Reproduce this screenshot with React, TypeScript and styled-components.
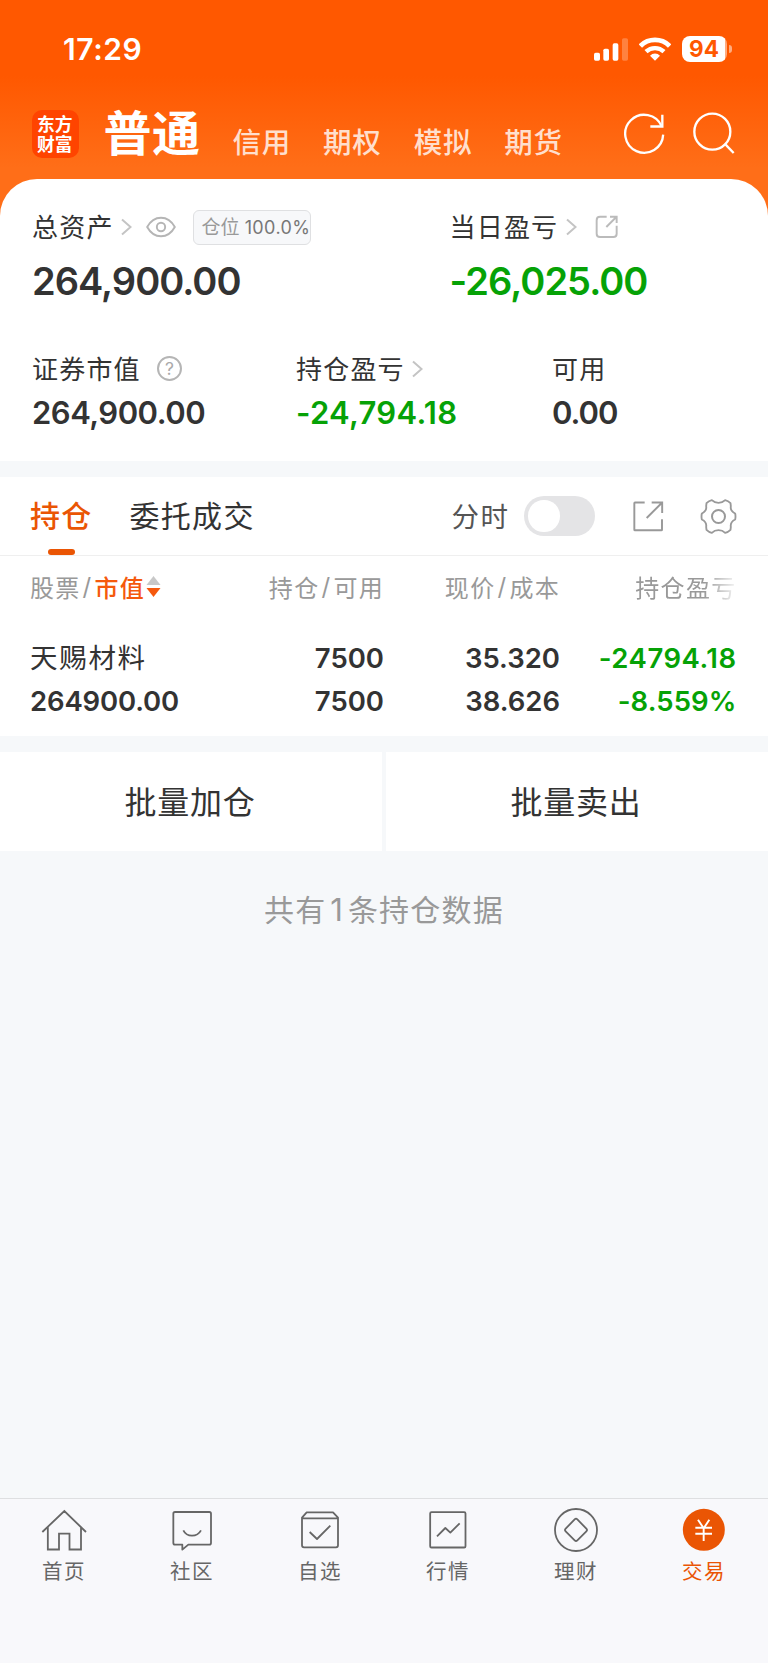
import React from 'react';
import styled, { createGlobalStyle } from 'styled-components';

const GlobalStyle = createGlobalStyle`
  *, *::before, *::after { box-sizing: border-box; }
  body { margin: 0; background: #f6f8fa; }
  svg { display: block; flex: none; }
`;

const Page = styled.div`
  display: flex;
  flex-direction: column;
  width: 768px;
  height: 1663px;
  font-family: Inter, 'Noto Sans CJK SC', sans-serif;
  color: #333;
  background: #f6f8fa;
  white-space: nowrap;
`;

/* ---------- header ---------- */

const Header = styled.header`
  display: flex;
  flex-direction: column;
  height: 220px;
  background: linear-gradient(#ff5800 0, #ff5800 76px, #ff6e18 168px, #ff6e18 100%);
`;

const StatusBar = styled.div`
  display: flex;
  align-items: center;
  height: 98px;
  padding: 0 35px 0 63px;
`;

const Clock = styled.time`
  flex: 1;
  font-size: 30px;
  font-weight: 600;
  letter-spacing: 0.6px;
  color: #fff;
`;

const StatusIcons = styled.div`
  display: flex;
  align-items: center;
  gap: 11px;
`;

const Battery = styled.div`
  display: flex;
  align-items: center;
  gap: 2px;
  margin-right: 1px;
`;

const BatteryBody = styled.div`
  width: 45px;
  height: 25.5px;
  border-radius: 8px;
  background: linear-gradient(90deg, #fff 43px, rgba(255, 255, 255, 0.5) 43px);
  color: #ff5800;
  font-size: 22.5px;
  font-weight: 700;
  line-height: 25px;
  text-align: center;
  padding-right: 1px;
`;

const BatteryTip = styled.div`
  width: 3px;
  height: 8px;
  border-radius: 0 3px 3px 0;
  background: rgba(255, 255, 255, 0.5);
`;

const NavBar = styled.nav`
  display: flex;
  align-items: flex-start;
  height: 48px;
  margin-top: 12px;
  padding: 0 33px 0 32px;
`;

const Logo = styled.div`
  width: 47px;
  height: 47.5px;
  padding: 4px 5px 0 5px;
  border-radius: 10px;
  background: #ff4400;
  color: #fff;
  font: 700 17.8px/19.5px 'Noto Sans CJK SC', sans-serif;
  white-space: normal;
  word-break: break-all;
`;

const ActiveAccount = styled.span`
  margin-left: 24.5px;
  width: 129px;
  font-size: 48px;
  font-weight: 600;
  line-height: 48px;
  letter-spacing: 0.5px;
  color: #fff;
`;

const Account = styled.span`
  width: 90.6px;
  padding-top: 16px;
  font-size: 28.5px;
  font-weight: 500;
  line-height: 34px;
  letter-spacing: 0.7px;
  color: #ffdfcd;
`;

const NavActions = styled.div`
  display: flex;
  gap: 26px;
  margin-left: auto;
  padding-top: 2px;
`;

/* ---------- summary card ---------- */

const Summary = styled.section`
  height: 282px;
  margin-top: -41px;
  padding: 26px 32px 0;
  border-radius: 37px 37px 0 0;
  background: #fff;
`;

const SummaryRow = styled.div<{ $columns: string }>`
  display: grid;
  grid-template-columns: ${(p) => p.$columns};
  & + & { margin-top: 33px; }
`;

const Label = styled.div`
  display: flex;
  align-items: center;
  height: 43px;
  font-size: 26px;
  letter-spacing: 1.2px;
`;

const LabelText = styled.span`
  margin-top: -2px;
`;

const Gap = styled.span<{ $w: number }>`
  flex: none;
  width: ${(p) => p.$w}px;
`;

const Amount = styled.div<{ $size: number; $track: number; $loss?: boolean }>`
  font-size: ${(p) => p.$size}px;
  font-weight: 600;
  line-height: ${(p) => (p.$size > 35 ? 66 : 45)}px;
  letter-spacing: ${(p) => p.$track}px;
  color: ${(p) => (p.$loss ? '#06a206' : '#333')};
`;

const Badge = styled.span`
  display: flex;
  align-items: center;
  gap: 5px;
  width: 118px;
  height: 35px;
  margin-top: 1px;
  padding-left: 7.5px;
  border: 1px solid #dfe0e2;
  border-radius: 6px;
  background: #f7f8fa;
  color: #999;
  font-size: 19px;
  line-height: 30px;
  letter-spacing: 0;
`;

const BadgeText = styled.span`
  margin-top: 1px;
`;

const BadgeValue = styled.span`
  margin-top: 1px;
  font-size: 18px;
  letter-spacing: 0.4px;
  color: #777;
`;

const Help = styled.span`
  width: 25.5px;
  height: 25.5px;
  border: 2px solid #b5b5b5;
  border-radius: 50%;
  font-size: 17.5px;
  line-height: 22px;
  letter-spacing: 0;
  text-align: center;
  color: #aaa;
`;

/* ---------- positions ---------- */

const Positions = styled.section`
  height: 259px;
  margin-top: 16px;
  background: #fff;
`;

const Tabs = styled.div`
  display: flex;
  align-items: center;
  height: 79px;
  padding: 0 30px;
  border-bottom: 1px solid #efefef;
`;

const Tab = styled.div<{ $active?: boolean }>`
  position: relative;
  width: ${(p) => (p.$active ? 99.5 : 322)}px;
  font-size: 30px;
  font-weight: ${(p) => (p.$active ? 500 : 400)};
  line-height: 78px;
  letter-spacing: 1.3px;
  color: ${(p) => (p.$active ? '#ea5504' : '#333')};
  &::after {
    content: '';
    display: ${(p) => (p.$active ? 'block' : 'none')};
    position: absolute;
    left: 17.5px;
    bottom: 0.5px;
    width: 27.5px;
    height: 5.5px;
    border-radius: 3px;
    background: #ea5504;
  }
`;

const ToggleLabel = styled.span`
  width: 72.5px;
  margin-top: -2px;
  font-size: 27.5px;
  letter-spacing: 1.6px;
  color: #555;
`;

const Toggle = styled.span`
  width: 71px;
  height: 39.5px;
  margin-right: 37.5px;
  padding: 4px;
  border-radius: 20px;
  background: #e4e4e6;
  &::before {
    content: '';
    display: block;
    width: 31.5px;
    height: 31.5px;
    border-radius: 50%;
    background: #fff;
  }
`;

const Grid = styled.div`
  display: grid;
  grid-template-columns: 174px 180px 176px 176.5px;
  padding-left: 30px;
`;

const HeadRow = styled(Grid)`
  height: 64px;
  padding-bottom: 4px;
  align-items: center;
`;

const BodyRow = styled(Grid)`
  padding-top: 17px;
`;

const Head = styled.span<{ $right?: boolean; $fade?: boolean }>`
  display: flex;
  align-items: center;
  justify-content: ${(p) => (p.$right ? 'flex-end' : 'flex-start')};
  font-size: 24px;
  letter-spacing: 1.3px;
  color: #999;
  ${(p) => p.$fade && 'mask-image: linear-gradient(90deg, #000 144px, transparent 180px);'}
`;

const Sorted = styled.span`
  margin-right: 0.5px;
  font-weight: 500;
  color: #f5590d;
`;

const Slash = styled.span`
  margin: 0 2px;
`;

const Cell = styled.div<{ $left?: boolean; $loss?: boolean }>`
  font-size: 27.5px;
  font-weight: 600;
  line-height: 43px;
  text-align: ${(p) => (p.$left ? 'left' : 'right')};
  color: ${(p) => (p.$loss ? '#06a206' : '#333')};
`;

const Line = styled.div<{ $track?: number }>`
  height: 43px;
  letter-spacing: ${(p) => p.$track || 0}px;
`;

const StockName = styled.div`
  height: 43px;
  font-size: 27.5px;
  font-weight: 400;
  letter-spacing: 1.7px;
`;

const BatchActions = styled.div`
  display: grid;
  grid-template-columns: 1fr 1fr;
  gap: 4px;
  height: 98.5px;
  margin-top: 16px;
`;

const BatchButton = styled.button`
  border: 0;
  padding: 0 2px 2px 0;
  background: #fff;
  color: #333;
  font-family: inherit;
  font-size: 32px;
  letter-spacing: 0.8px;
`;

const Footnote = styled.p`
  flex: 1;
  margin: 0;
  padding-top: 37.5px;
  font-size: 30px;
  line-height: 44px;
  letter-spacing: 1.2px;
  text-align: center;
  color: #999;
`;

const Count = styled.span`
  margin: 0 3.8px;
  font-size: 31px;
  font-weight: 400;
`;

/* ---------- bottom navigation ---------- */

const TabBar = styled.nav`
  display: grid;
  grid-template-columns: repeat(6, 1fr);
  height: 165px;
  padding-top: 7px;
  border-top: 1px solid #dedfe1;
  background: #f8f8fb;
`;

const TabItem = styled.div<{ $active?: boolean }>`
  display: flex;
  flex-direction: column;
  align-items: center;
  color: ${(p) => (p.$active ? '#ea5504' : '#666')};
`;

const TabLabel = styled.span`
  font-size: 20.5px;
  line-height: 36px;
  letter-spacing: 1.4px;
`;

/* ---------- icons ---------- */

const Chevron = () => (
  <svg width="11" height="18" viewBox="0 0 11 18" fill="none" stroke="#c4c4c4" strokeWidth="2">
    <path d="M1 1.4 L9.6 9 L1 16.6" />
  </svg>
);

const Eye = () => (
  <svg width="30" height="22" viewBox="0 0 90 66" fill="none" stroke="#b5b5b5" strokeWidth="5.800">
    <path d="M3.500 33 C24 -4 66 -4 86.500 33 C66 70 24 70 3.500 33 Z" strokeLinejoin="round" />
    <circle cx="45" cy="33" r="12.500" />
  </svg>
);

const ShareRound = () => (
  <svg width="23" height="23" viewBox="633 78 69 69" fill="none" stroke="#bbb" strokeWidth="5.800">
    <path d="M668 83.500 H648 q-10 0 -10 10 V134 q0 10 10 10 H688 q10 0 10 -10 V110" />
    <path d="M667 114 L697 84 M678 83.500 H698 V102" />
  </svg>
);

const ShareSquare = () => (
  <svg width="31" height="31" viewBox="746 152 93 93" fill="none" stroke="#999" strokeWidth="5.800">
    <path d="M781 156.500 H752 q-2 0 -2 2 V238 q0 2 2 2 H831 q2 0 2 -2 V207" />
    <path d="M787 203 L832 158 M802 156.500 H833.500 V188" />
  </svg>
);

const Gear = () => (
  <svg width="37" height="37" viewBox="-55.500 -55.500 111 111" fill="none" stroke="#999" strokeWidth="5.500" strokeLinejoin="round">
    <circle r="19.500" strokeWidth="6" />
    <path d="M50 -9 Q52 0 50 9 C42 13 35 19 37 31 L36 40 Q29 47 20 49 C14 43 8 41 0 41 C-8 41 -14 43 -20 49 Q-29 47 -36 40 L-37 31 C-35 19 -42 13 -50 9 Q-52 0 -50 -9 C-42 -13 -35 -19 -37 -31 L-36 -40 Q-29 -47 -20 -49 C-14 -43 -8 -41 0 -41 C8 -41 14 -43 20 -49 Q29 -47 36 -40 L37 -31 C35 -19 42 -13 50 -9 Z" />
  </svg>
);

const SortArrows = () => (
  <svg width="15" height="21" viewBox="0 0 15 21">
    <path d="M7.500 0 L14.500 9 H0.500 Z" fill="#c8c8c8" />
    <path d="M0.500 12 H14.500 L7.500 21 Z" fill="#f5590d" />
  </svg>
);

const Signal = () => (
  <svg width="34" height="23" viewBox="633 112 102 69" fill="#fff">
    <rect x="633" y="156" width="18" height="24" rx="5" />
    <rect x="661" y="144" width="17" height="36" rx="5" />
    <rect x="689" y="128" width="17" height="52" rx="5" />
    <rect x="717" y="113" width="18" height="67" rx="5" opacity="0.25" />
  </svg>
);

const Wifi = () => (
  <svg width="32" height="24" viewBox="767 109 96 72" fill="none" stroke="#fff">
    <path d="M771 136 A62 62 0 0 1 859 136" strokeWidth="14.500" />
    <path d="M788 153 A39 39 0 0 1 842 153" strokeWidth="13" />
    <path d="M815 180 L800 165 A21 21 0 0 1 830 165 Z" fill="#fff" stroke="none" />
  </svg>
);

const Refresh = () => (
  <svg width="43" height="43" viewBox="717 337 129 129" fill="none" stroke="#fff" strokeWidth="7">
    <path d="M837.500 405 A57 57 0 1 1 833 380" />
    <path d="M835 345 V380.500 H799" />
  </svg>
);

const Search = () => (
  <svg width="43" height="43" viewBox="923 337 129 129" fill="none" stroke="#fff" strokeWidth="7">
    <circle cx="984" cy="396" r="54" />
    <path d="M1021 432 L1048 460" />
  </svg>
);

const TabIcon = ({ children }: { children: React.ReactNode }) => (
  <svg width="48" height="48" viewBox="120 78 144 144" fill="none" stroke="currentColor" strokeWidth="5.400" strokeLinejoin="round">
    {children}
  </svg>
);

const tabs = [
  {
    label: '首页',
    icon: <path d="M127 156 L193 93 L258 156 M143.500 142 V208.500 H177 V161 H208.500 V208.500 H243 V142" strokeLinejoin="miter" />,
  },
  {
    label: '社区',
    icon: (
      <>
        <path d="M141 96 H244 q5 0 5 5 V189 q0 5 -5 5 H181 L163 209 V194 H141 q-5 0 -5 -5 V101 q0 -5 5 -5 Z" />
        <path d="M166 151 Q174 167 192 167 Q210 167 219 151" />
      </>
    ),
  },
  {
    label: '自选',
    icon: (
      <>
        <path d="M138 115 H246 V196 q0 6 -6 6 H144 q-6 0 -6 -6 V113 L152 97 H231 L246 113 V115" />
        <path d="M161 156 L183 177 L223 137" />
      </>
    ),
  },
  {
    label: '行情',
    icon: (
      <>
        <rect x="138.500" y="96.500" width="106" height="106" rx="4" />
        <path d="M159 169 L184 144 L199 158 L227 130" />
      </>
    ),
  },
  {
    label: '理财',
    icon: (
      <>
        <circle cx="192" cy="150" r="63" />
        <path d="M188 118 q4 -4 8 0 L223 146 q4 4 0 8 L196 181 q-4 4 -8 0 L161 154 q-4 -4 0 -8 Z" />
      </>
    ),
  },
  {
    label: '交易',
    icon: (
      <>
        <circle cx="191.500" cy="149.500" r="63" fill="currentColor" stroke="none" />
        <path d="M174 119 L191 145 L208 119 M191 145 V183 M166 143 H216 M166 161 H216" stroke="#fff" strokeWidth="5.800" strokeLinejoin="miter" />
      </>
    ),
  },
];

export default function App() {
  return (
    <Page>
      <GlobalStyle />
      <Header>
        <StatusBar>
          <Clock>17:29</Clock>
          <StatusIcons>
            <Signal />
            <Wifi />
            <Battery>
              <BatteryBody>94</BatteryBody>
              <BatteryTip />
            </Battery>
          </StatusIcons>
        </StatusBar>
        <NavBar>
          <Logo>东方财富</Logo>
          <ActiveAccount>普通</ActiveAccount>
          {['信用', '期权', '模拟', '期货'].map((name) => (
            <Account key={name}>{name}</Account>
          ))}
          <NavActions>
            <Refresh />
            <Search />
          </NavActions>
        </NavBar>
      </Header>

      <Summary>
        <SummaryRow $columns="417.5px 1fr">
          <div>
            <Label>
              <LabelText>总资产</LabelText>
              <Gap $w={7} />
              <Chevron />
              <Gap $w={14.5} />
              <Eye />
              <Gap $w={17} />
              <Badge>
                <BadgeText>仓位</BadgeText>
                <BadgeValue>100.0%</BadgeValue>
              </Badge>
            </Label>
            <Amount $size={38} $track={-0.98}>264,900.00</Amount>
          </div>
          <div>
            <Label>
              <LabelText>当日盈亏</LabelText>
              <Gap $w={7.5} />
              <Chevron />
              <Gap $w={18} />
              <ShareRound />
            </Label>
            <Amount $size={38} $track={-0.95} $loss>-26,025.00</Amount>
          </div>
        </SummaryRow>
        <SummaryRow $columns="264px 256px 1fr">
          <div>
            <Label>
              <LabelText>证券市值</LabelText>
              <Gap $w={16} />
              <Help>?</Help>
            </Label>
            <Amount $size={31} $track={-0.5}>264,900.00</Amount>
          </div>
          <div>
            <Label>
              <LabelText>持仓盈亏</LabelText>
              <Gap $w={7.5} />
              <Chevron />
            </Label>
            <Amount $size={31} $track={0.3} $loss>-24,794.18</Amount>
          </div>
          <div>
            <Label>
              <LabelText>可用</LabelText>
            </Label>
            <Amount $size={31} $track={-1}>0.00</Amount>
          </div>
        </SummaryRow>
      </Summary>

      <Positions>
        <Tabs>
          <Tab $active>持仓</Tab>
          <Tab>委托成交</Tab>
          <ToggleLabel>分时</ToggleLabel>
          <Toggle />
          <ShareSquare />
          <Gap $w={36} />
          <Gear />
        </Tabs>
        <HeadRow>
          <Head>
            股票<Slash>/</Slash>
            <Sorted>市值</Sorted>
            <SortArrows />
          </Head>
          <Head $right>
            持仓<Slash>/</Slash>可用
          </Head>
          <Head $right>
            现价<Slash>/</Slash>成本
          </Head>
          <Head $right $fade>持仓盈亏</Head>
        </HeadRow>
        <BodyRow>
          <Cell $left>
            <StockName>天赐材料</StockName>
            <Line $track={-0.15}>264900.00</Line>
          </Cell>
          <Cell>
            <Line>7500</Line>
            <Line>7500</Line>
          </Cell>
          <Cell>
            <Line>35.320</Line>
            <Line>38.626</Line>
          </Cell>
          <Cell $loss>
            <Line $track={0.5}>-24794.18</Line>
            <Line $track={0.1}>-8.559%</Line>
          </Cell>
        </BodyRow>
      </Positions>

      <BatchActions>
        <BatchButton>批量加仓</BatchButton>
        <BatchButton>批量卖出</BatchButton>
      </BatchActions>
      <Footnote>
        共有<Count>1</Count>条持仓数据
      </Footnote>

      <TabBar>
        {tabs.map((tab) => (
          <TabItem key={tab.label} $active={tab.label === '交易'}>
            <TabIcon>{tab.icon}</TabIcon>
            <TabLabel>{tab.label}</TabLabel>
          </TabItem>
        ))}
      </TabBar>
    </Page>
  );
}
